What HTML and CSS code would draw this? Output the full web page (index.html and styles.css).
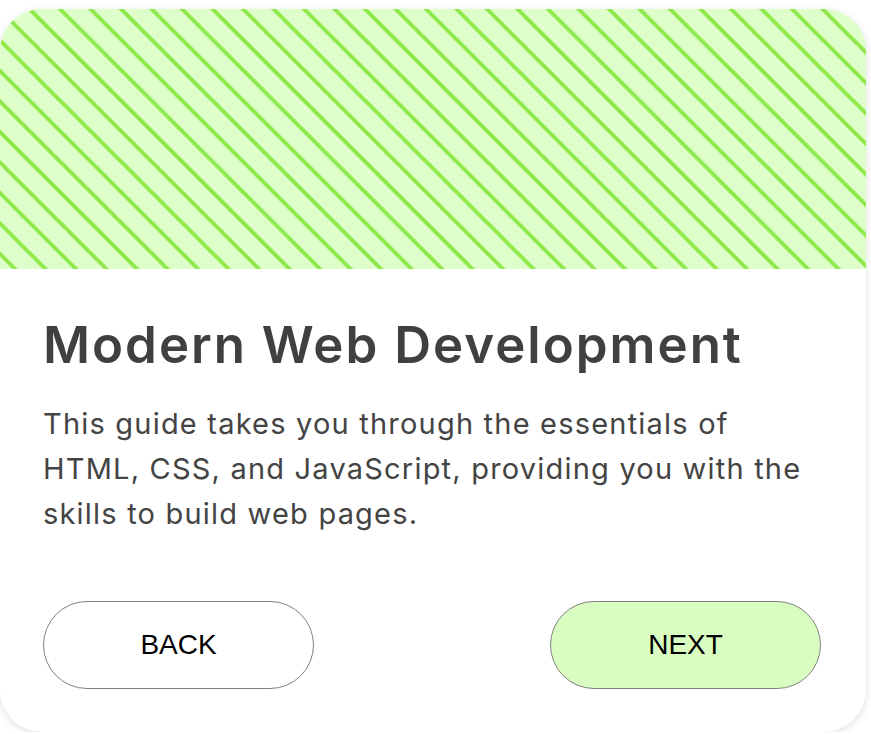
FILE: index.html
```html
<!DOCTYPE html>
<html>
<head>
<meta charset="utf-8">
<link rel="stylesheet" href="styles.css">
</head>
<body>
<div class="card">
  <div class="banner">
    <svg class="stripes" width="100%" height="260" aria-hidden="true">
      <defs>
        <pattern id="diag" patternUnits="userSpaceOnUse" width="30.5" height="30.5" patternTransform="translate(29.5 0)">
          <path d="M-2 -2 L32.5 32.5 M28.5 -2 L32.5 2 M-2 28.5 L2 32.5" stroke="#8fe84b" stroke-width="4" fill="none"/>
        </pattern>
      </defs>
      <rect width="100%" height="100%" fill="#dfffca"/>
      <rect width="100%" height="100%" fill="url(#diag)"/>
    </svg>
  </div>
  <div class="content">
    <h1 class="title">Modern Web Development</h1>
    <p class="text">This guide takes you through the essentials of HTML, CSS, and JavaScript, providing you with the skills to build web pages.</p>
    <div class="actions">
      <button class="btn">BACK</button>
      <button class="btn btn-next">NEXT</button>
    </div>
  </div>
</div>
</body>
</html>
```
FILE: styles.css
```css
html, body {
  margin: 0;
  padding: 0;
  background: #ffffff;
}
body {
  padding-top: 9px;
}
.card {
  width: 866px;
  height: 723px;
  box-sizing: border-box;
  background: #ffffff;
  border-radius: 42px;
  overflow: hidden;
  box-shadow: 0 2px 8px rgba(0,0,0,0.12);
  display: flex;
  flex-direction: column;
}
.banner {
  height: 260px;
  flex: none;
  background: #dfffca;
}
.stripes {
  display: block;
}
.content {
  padding: 40px 45px 43px 43px;
  display: flex;
  flex-direction: column;
  flex: 1;
}
.title {
  margin: 0;
  font-family: "Inter", sans-serif;
  font-weight: 600;
  font-size: 51px;
  line-height: 72px;
  letter-spacing: 2px;
  color: #404040;
  white-space: nowrap;
}
.text {
  margin: 20px 0 0;
  max-width: 760px;
  font-family: "Inter", sans-serif;
  font-size: 29px;
  line-height: 45px;
  letter-spacing: 1.2px;
  color: #444444;
}
.actions {
  margin-top: auto;
  display: flex;
  justify-content: space-between;
}
.btn {
  width: 271px;
  height: 88px;
  border: 1px solid #808080;
  border-radius: 44px;
  background: #ffffff;
  font-family: "Liberation Sans", Arial, sans-serif;
  font-size: 28px;
  color: #000000;
  cursor: pointer;
}
.btn-next {
  background: #d9fdc1;
}
```
